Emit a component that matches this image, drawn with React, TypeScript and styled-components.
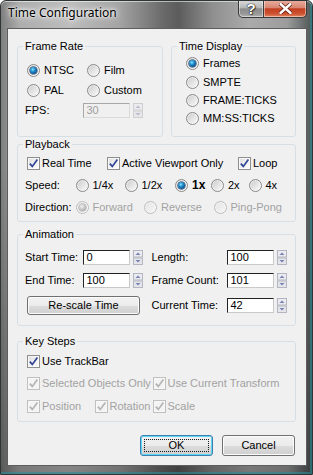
import * as React from 'react';
import styled, { createGlobalStyle } from 'styled-components';

const GlobalStyle = createGlobalStyle`
  html, body { margin: 0; padding: 0; background: #ffffff; }
  body { font-family: "Liberation Sans", Arial, sans-serif; font-size: 11px; color: #000; }
  *, *::before, *::after { box-sizing: border-box; }
`;

const Window = styled.div`
  width: 313px;
  height: 475px;
  display: flex;
  flex-direction: column;
  padding: 0 5px 8px 6px;
  border: 1px solid #2f3436;
  border-radius: 6px 6px 0 0;
  overflow: hidden;
  background:
    linear-gradient(180deg, rgba(0, 0, 0, 0) 0%, rgba(0, 0, 0, 0) 35%, rgba(0, 0, 0, 0.3) 100%),
    linear-gradient(90deg, #7e7e7e 0%, #adadad 6%, #bdbdbd 22%, #a4a4a4 38%, #6a6a6a 52%, #5c5c5c 57%, #8f8f8f 68%, #ababab 80%, #9c9c9c 92%, #4f5556 100%);
  box-shadow: inset 0 1px 0 rgba(255, 255, 255, 0.55), inset -2px -2px 0 rgba(42, 140, 150, 0.6);
`;

const TitleBar = styled.div`
  height: 27px;
  flex: none;
  display: flex;
  align-items: flex-start;
  justify-content: space-between;
`;

const Caption = styled.div`
  padding: 4px 0 0 1px;
  font-family: "Noto Sans", "Open Sans", sans-serif;
  font-size: 12px;
  line-height: 16px;
  color: #000;
  text-shadow: 0 0 8px #fff, 0 0 5px #fff, 0 0 2px rgba(255, 255, 255, 0.9);
`;

const CaptionButtons = styled.div`
  display: flex;
  margin-top: -1px;
`;

const CapBtn = styled.div<{ $close?: boolean; $w: number }>`
  width: ${p => p.$w}px;
  height: 18px;
  display: flex;
  align-items: center;
  justify-content: center;
  border: 1px solid #3a3a3a;
  border-top: none;
  margin-left: ${p => (p.$close ? '-1px' : '0')};
  border-radius: ${p => (p.$close ? '0 0 5px 0' : '0 0 0 5px')};
  background: ${p =>
    p.$close
      ? 'linear-gradient(180deg, #eab0a2 0%, #d98672 45%, #c33f1f 52%, #cc5231 80%, #e0875f 100%)'
      : 'linear-gradient(180deg, #dcdcdc 0%, #b7b7b7 45%, #8c8c8c 52%, #979797 80%, #b2b2b2 100%)'};
  box-shadow: inset 0 0 0 1px rgba(255, 255, 255, 0.45);
`;

const HelpGlyph = styled.span`
  font-family: "Liberation Sans", Arial, sans-serif;
  font-weight: 700;
  font-size: 15px;
  line-height: 15px;
  color: #fff;
  text-shadow: 0 0 1px #222, 0 0 1px #222, 0 0 1px #222, 1px 1px 1px rgba(0, 0, 0, 0.5);
`;

const Client = styled.div`
  flex: 1;
  display: flex;
  flex-direction: column;
  background: #f0f0f0;
  border: 1px solid #5d5d5d;
  padding: 10.5px 10px 0 9px;
`;

const TopRow = styled.div`
  display: grid;
  grid-template-columns: 146px 125px;
  column-gap: 8px;
`;

const Group = styled.fieldset<{ $mt?: number }>`
  margin: ${p => p.$mt ?? 0}px 0 0 0;
  padding: 0;
  min-width: 0;
  border: 1px solid #d5dfe5;
  border-radius: 3px;
`;

const Legend = styled.legend`
  margin-left: 5px;
  padding: 0 2px;
  font-size: 11px;
  line-height: 13px;
`;

const GroupBody = styled.div<{ $pad: string }>`
  padding: ${p => p.$pad};
`;

const RadioGrid = styled.div<{ $cols: string; $row: number; $indent?: number }>`
  display: grid;
  grid-template-columns: ${p => p.$cols};
  grid-auto-rows: ${p => p.$row}px;
  align-items: center;
  padding-left: ${p => p.$indent ?? 0}px;
`;

const Line = styled.div<{ $h: number; $indent?: number; $gap?: number }>`
  display: flex;
  align-items: center;
  height: ${p => p.$h}px;
  padding-left: ${p => p.$indent ?? 0}px;
  margin-top: ${p => p.$gap ?? 0}px;
`;

const FieldLabel = styled.span<{ $w?: number }>`
  flex: none;
  width: ${p => (p.$w ? `${p.$w}px` : 'auto')};
  line-height: 13px;
  white-space: nowrap;
`;

const Option = styled.label<{ $w?: number; $off?: boolean; $bold?: boolean; $gap: number }>`
  display: flex;
  align-items: center;
  gap: ${p => p.$gap}px;
  flex: none;
  width: ${p => (p.$w ? `${p.$w}px` : 'auto')};
  color: ${p => (p.$off ? '#a2a2a2' : '#000')};
  font-weight: ${p => (p.$bold ? 700 : 400)};
  font-size: ${p => (p.$bold ? 12 : 11)}px;
  line-height: 13px;
  white-space: nowrap;
`;

const Circle = styled.span<{ $on?: boolean; $off?: boolean }>`
  flex: none;
  width: 13px;
  height: 13px;
  border-radius: 50%;
  display: flex;
  align-items: center;
  justify-content: center;
  border: 1px solid ${p => (p.$off ? '#bdbdbd' : '#8a8a8a')};
  background: ${p =>
    p.$off
      ? 'linear-gradient(135deg, #e4e4e4 0%, #f6f6f6 100%)'
      : 'linear-gradient(135deg, #c9c9c9 0%, #e6e6e6 55%, #fbfbfb 100%)'};
  box-shadow: inset 0 0 0 1px rgba(255, 255, 255, 0.5);

  &::after {
    content: '';
    display: ${p => (p.$on ? 'block' : 'none')};
    width: 7px;
    height: 7px;
    border-radius: 50%;
    background: ${p =>
      p.$off
        ? 'radial-gradient(circle at 40% 35%, #f2f2f2 0%, #c4c4c4 50%, #9a9a9a 100%)'
        : 'radial-gradient(circle at 40% 35%, #8fe6ff 0%, #2a9ad6 30%, #0f5a9c 65%, #082f60 100%)'};
    box-shadow: 0 0 0 0.5px ${p => (p.$off ? '#9c9c9c' : '#0d2c55')};
  }
`;

const Box = styled.span<{ $off?: boolean }>`
  flex: none;
  width: 13px;
  height: 13px;
  display: flex;
  align-items: center;
  justify-content: center;
  border: 1px solid ${p => (p.$off ? '#c0c0c0' : '#8e8f8f')};
  background: ${p =>
    p.$off ? '#f4f4f4' : 'linear-gradient(135deg, #dcdcdc 0%, #f0f0f0 50%, #fdfdfd 100%)'};
  box-shadow: inset 0 0 0 1px ${p => (p.$off ? '#f7f7f7' : 'rgba(255, 255, 255, 0.7)')};
`;

const Edit = styled.div<{ $w: number; $off?: boolean }>`
  flex: none;
  width: ${p => p.$w}px;
  height: 15px;
  padding-left: 3px;
  border: 1px solid;
  border-color: ${p => (p.$off ? '#a8a8a8 #dadada #dadada #a8a8a8' : '#222 #c9c9c9 #c9c9c9 #222')};
  background: ${p => (p.$off ? '#f0f0f0' : '#fff')};
  color: ${p => (p.$off ? '#9d9d9d' : '#000')};
  font-size: 11px;
  line-height: 13px;
`;

const SpinWrap = styled.div`
  display: flex;
  align-items: center;
  gap: 3px;
`;

const PushButton = styled.div<{ $w: number; $h: number; $default?: boolean; $indent?: number }>`
  position: relative;
  flex: none;
  width: ${p => p.$w}px;
  height: ${p => p.$h}px;
  margin-left: ${p => p.$indent ?? 0}px;
  display: flex;
  align-items: center;
  justify-content: center;
  border: 1px solid ${p => (p.$default ? '#3c7fb1' : '#707070')};
  border-radius: 3px;
  background: linear-gradient(180deg, #f2f2f2 0%, #ebebeb 50%, #dddddd 51%, #cfcfcf 100%);
  box-shadow: inset 0 0 0 1px ${p => (p.$default ? '#5fd4f4' : '#fcfcfc')};
  font-size: 11px;
  line-height: 13px;
  color: #000;

  &::after {
    content: '';
    display: ${p => (p.$default ? 'block' : 'none')};
    position: absolute;
    inset: 3px;
    border: 1px dotted #1a1a1a;
  }
`;

const AnimGrid = styled.div`
  display: grid;
  grid-template-columns: 57.5px 69px 75px auto;
  grid-template-rows: 15px 15px 20px;
  row-gap: 8px;
  align-items: center;
`;

const ButtonCell = styled.div`
  grid-column: 1 / span 2;
  display: flex;
  align-items: center;
`;

const Footer = styled.div`
  display: flex;
  justify-content: flex-end;
  gap: 9px;
  margin-top: 13px;
  padding-right: 1px;
`;

type OptProps = { label: string; w?: number; on?: boolean; off?: boolean; bold?: boolean };

const Radio = ({ label, w, on, off, bold }: OptProps) => (
  <Option $w={w} $off={off} $bold={bold} $gap={4}>
    <Circle $on={on} $off={off} />
    <span>{label}</span>
  </Option>
);

const Check = ({ label, w, on, off }: OptProps) => (
  <Option $w={w} $off={off} $gap={2}>
    <Box $off={off}>
      {on && (
        <svg width="11" height="11" viewBox="0 0 11 11">
          <path
            d="M1.8 5.6 L4.3 8.4 L9.4 1.6"
            fill="none"
            stroke={off ? '#b4b4b4' : '#2f4597'}
            strokeWidth="1.7"
          />
        </svg>
      )}
    </Box>
    <span>{label}</span>
  </Option>
);

const Spinner = ({ off }: { off?: boolean }) => (
  <svg width="10" height="15" viewBox="0 0 10 15">
    <rect x="0.5" y="0.5" width="9" height="6.5" fill="#ececf0" stroke={off ? '#cfcfcf' : '#b3b6c2'} />
    <rect x="0.5" y="8" width="9" height="6.5" fill="#e6e6ea" stroke={off ? '#cfcfcf' : '#b3b6c2'} />
    <polygon points="2.5,5 5,2.5 7.5,5" fill={off ? '#b9bccb' : '#7682b4'} />
    <polygon points="2.5,10 5,12.5 7.5,10" fill={off ? '#b9bccb' : '#7682b4'} />
  </svg>
);

const SpinField = ({ value, off }: { value: string; off?: boolean }) => (
  <SpinWrap>
    <Edit $w={47} $off={off}>{value}</Edit>
    <Spinner off={off} />
  </SpinWrap>
);

const App: React.FC = () => (
  <>
    <GlobalStyle />
    <Window>
      <TitleBar>
        <Caption>Time Configuration</Caption>
        <CaptionButtons>
          <CapBtn $w={26}>
            <HelpGlyph>?</HelpGlyph>
          </CapBtn>
          <CapBtn $w={44} $close>
            <svg width="13" height="11" viewBox="0 0 13 11">
              <path
                d="M1.5 1 L11.5 10 M11.5 1 L1.5 10"
                stroke="#5a1a10"
                strokeWidth="4"
                strokeLinecap="round"
              />
              <path
                d="M1.5 1 L11.5 10 M11.5 1 L1.5 10"
                stroke="#ffffff"
                strokeWidth="2.4"
                strokeLinecap="round"
              />
            </svg>
          </CapBtn>
        </CaptionButtons>
      </TitleBar>

      <Client>
        <TopRow>
          <Group>
            <Legend>Frame Rate</Legend>
            <GroupBody $pad="7.5px 0 16px 7px">
              <RadioGrid $cols="60px auto" $row={20} $indent={2}>
                <Radio label="NTSC" on />
                <Radio label="Film" />
                <Radio label="PAL" />
                <Radio label="Custom" />
              </RadioGrid>
              <Line $h={20}>
                <FieldLabel $w={57.5}>FPS:</FieldLabel>
                <SpinField value="30" off />
              </Line>
            </GroupBody>
          </Group>
          <Group>
            <Legend>Time Display</Legend>
            <GroupBody $pad="2px 0 0 14px">
              <RadioGrid $cols="auto" $row={18.4}>
                <Radio label="Frames" on />
                <Radio label="SMPTE" />
                <Radio label="FRAME:TICKS" />
                <Radio label="MM:SS:TICKS" />
              </RadioGrid>
            </GroupBody>
          </Group>
        </TopRow>

        <Group $mt={1}>
          <Legend>Playback</Legend>
          <GroupBody $pad="1px 0 3px 7px">
            <Line $h={22} $indent={2}>
              <Check label="Real Time" w={80} on />
              <Check label="Active Viewport Only" w={131} on />
              <Check label="Loop" on />
            </Line>
            <Line $h={22}>
              <FieldLabel $w={50.5}>Speed:</FieldLabel>
              <Radio label="1/4x" w={49} />
              <Radio label="1/2x" w={50.5} />
              <Radio label="1x" w={36} on bold />
              <Radio label="2x" w={37.5} />
              <Radio label="4x" />
            </Line>
            <Line $h={22}>
              <FieldLabel $w={50.5}>Direction:</FieldLabel>
              <Radio label="Forward" w={68.5} on off />
              <Radio label="Reverse" w={69.5} off />
              <Radio label="Ping-Pong" off />
            </Line>
          </GroupBody>
        </Group>

        <Group $mt={5.5}>
          <Legend>Animation</Legend>
          <GroupBody $pad="9px 0 9px 7px">
            <AnimGrid>
              <FieldLabel>Start Time:</FieldLabel>
              <SpinField value="0" />
              <FieldLabel>Length:</FieldLabel>
              <SpinField value="100" />
              <FieldLabel>End Time:</FieldLabel>
              <SpinField value="100" />
              <FieldLabel>Frame Count:</FieldLabel>
              <SpinField value="101" />
              <ButtonCell>
                <PushButton $w={113} $h={19} $indent={2}>Re-scale Time</PushButton>
              </ButtonCell>
              <FieldLabel>Current Time:</FieldLabel>
              <SpinField value="42" />
            </AnimGrid>
          </GroupBody>
        </Group>

        <Group $mt={9}>
          <Legend>Key Steps</Legend>
          <GroupBody $pad="3.5px 0 5px 9px">
            <Line $h={20}>
              <Check label="Use TrackBar" on />
            </Line>
            <Line $h={20} $gap={2.5}>
              <Check label="Selected Objects Only" w={125.5} on off />
              <Check label="Use Current Transform" on off />
            </Line>
            <Line $h={20} $gap={2.5}>
              <Check label="Position" w={67.5} on off />
              <Check label="Rotation" w={58} on off />
              <Check label="Scale" on off />
            </Line>
          </GroupBody>
        </Group>

        <Footer>
          <PushButton $w={73} $h={21} $default>OK</PushButton>
          <PushButton $w={73} $h={21}>Cancel</PushButton>
        </Footer>
      </Client>
    </Window>
  </>
);

export default App;
